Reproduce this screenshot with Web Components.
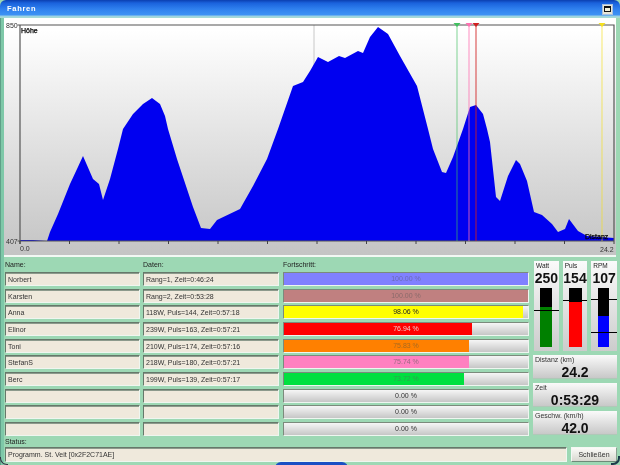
<!DOCTYPE html>
<html lang="de"><head><meta charset="utf-8"><title>Fahren</title>
<style>
html,body{margin:0;padding:0;width:620px;height:465px;overflow:hidden;background:#9dd8b4}
body{font:7px "Liberation Sans",Arial,sans-serif;color:#2a2a2a}
</style></head><body>
<app-window>
  <title-bar slot="title">Fahren</title-bar>
  <elevation-chart slot="chart"></elevation-chart>
  <rider-table slot="table">
    <col-label>Name:</col-label><col-label>Daten:</col-label><col-label style="margin-left:1px">Fortschritt:</col-label>
    <field-box>Norbert</field-box><field-box>Rang=1, Zeit=0:46:24</field-box><progress-bar pct="100" color="#8080ff" ink="#6a6ab4">100.00 %</progress-bar>
    <field-box>Karsten</field-box><field-box>Rang=2, Zeit=0:53:28</field-box><progress-bar pct="100" color="#c08080" ink="#8a6a6a">100.00 %</progress-bar>
    <field-box>Anna</field-box><field-box>118W, Puls=144, Zeit=0:57:18</field-box><progress-bar pct="98.06" color="#ffff00" ink="#222">98.06 %</progress-bar>
    <field-box>Elinor</field-box><field-box>239W, Puls=163, Zeit=0:57:21</field-box><progress-bar pct="76.94" color="#ff0000" ink="#f3c8c8">76.94 %</progress-bar>
    <field-box>Toni</field-box><field-box>210W, Puls=174, Zeit=0:57:16</field-box><progress-bar pct="75.83" color="#ff8000" ink="#a86a20">75.83 %</progress-bar>
    <field-box>StefanS</field-box><field-box>218W, Puls=180, Zeit=0:57:21</field-box><progress-bar pct="75.74" color="#ff80c0" ink="#9a6a80">75.74 %</progress-bar>
    <field-box>Berc</field-box><field-box>199W, Puls=139, Zeit=0:57:17</field-box><progress-bar pct="73.72" color="#00e040" ink="#30a050">73.72 %</progress-bar>
    <field-box></field-box><field-box></field-box><progress-bar pct="0" color="#ccc" ink="#333">0.00 %</progress-bar>
    <field-box></field-box><field-box></field-box><progress-bar pct="0" color="#ccc" ink="#333">0.00 %</progress-bar>
    <field-box></field-box><field-box></field-box><progress-bar pct="0" color="#ccc" ink="#333">0.00 %</progress-bar>
  </rider-table>
  <side-panel slot="side">
    <gauge-row>
      <gauge-meter w="25" bw="12" bl="6" fill="40" color="#008000" marks="22"><span slot="label">Watt</span>250</gauge-meter>
      <gauge-meter w="25" bw="13" bl="6" fill="45" color="#ff0000" marks="12"><span slot="label">Puls</span>154</gauge-meter>
      <gauge-meter w="26" bw="11" bl="7" fill="31" color="#0000ff" marks="11,44"><span slot="label">RPM</span>107</gauge-meter>
    </gauge-row>
    <stat-box><span slot="label">Distanz (km)</span>24.2</stat-box>
    <stat-box><span slot="label">Zeit</span>0:53:29</stat-box>
    <stat-box><span slot="label">Geschw. (km/h)</span>42.0</stat-box>
  </side-panel>
  <status-bar slot="status" text="Programm. St. Veit [0x2F2C71AE]"></status-bar>
</app-window>
<script>
const def=(name,css,html)=>{
  customElements.define(name,class extends HTMLElement{
    constructor(){super();this.attachShadow({mode:'open'});}
    connectedCallback(){if(this.shadowRoot.firstChild)return;
      this.shadowRoot.innerHTML='<style>'+css+'</style>'+(typeof html==='function'?html(this):html);}
  });
};
def('app-window',`
  :host{display:flex;flex-direction:column;position:relative;width:620px;height:465px;overflow:hidden;background:#9dd8b4;filter:blur(.25px)}
  .body{flex:1;display:flex;flex-direction:column;padding:0 2px 0 3px;border-left:1px solid #5f9f88;box-shadow:inset 3px 0 0 #7ec8a8;min-height:0}
  .lower{display:flex;gap:4px}
  .pill{position:absolute;left:275px;top:462px;width:73px;height:6px;background:#1a4fc4;border-radius:6px 6px 0 0}
  .cnr{position:absolute;width:7px;height:7px;bottom:0}
  .cnr.l{left:0;border-left:1px solid #334;border-bottom:1px solid #334;border-radius:0 0 0 7px}
  .cnr.r{right:0;border-right:2px solid #1c3a4a;border-bottom:2px solid #1c3a4a;border-radius:0 0 7px 0}
`,`<slot name="title"></slot><div class="body"><slot name="chart"></slot>
  <div class="lower"><slot name="table"></slot><slot name="side"></slot></div>
  <slot name="status"></slot></div><div class="pill"></div><div class="cnr l"></div><div class="cnr r"></div>`);
def('title-bar',`
  :host{display:flex;align-items:center;justify-content:space-between;height:18px;box-sizing:border-box;padding:0 7px 2px 7px;flex:none;
    background:linear-gradient(#0b3fb0 0,#1a62dc 3px,#2f80ee 9px,#3d92f4 15px,#9ad0e4 16px,#a8dcd0 18px);
    border-radius:6px 6px 0 0;color:#fff;font:bold 7.5px "Liberation Sans",Arial,sans-serif;letter-spacing:.7px}
  .b{width:11px;height:11px;box-sizing:border-box;background:#e9e6d6;display:flex;align-items:center;justify-content:center;margin-top:2px;border:1px solid #a8c0e0}
  .b i{display:block;width:7px;height:6px;box-sizing:border-box;border:1px solid #111;border-top-width:2px;background:#f4f0d8}
`,`<span><slot></slot></span><div class="b"><i></i></div>`);
const P=[[20,241],[33,241],[47,242],[50,233],[58,215],[70,185],[77,170],[83,157],[93,180],[99,185],[103,201],[110,180],[118,150],[123,130],[133,115],[143,105],[152,99],[160,105],[165,117],[168,130],[177,160],[187,190],[193,208],[201,229],[210,230],[217,221],[240,210],[253,187],[267,160],[278,130],[293,87],[303,83],[310,72],[318,58],[328,63],[339,57],[345,59],[358,52],[363,54],[370,38],[378,28],[388,35],[400,57],[417,87],[428,130],[433,150],[442,173],[446,174],[453,158],[463,130],[470,108],[476,106],[483,115],[487,130],[490,143],[496,198],[500,202],[508,177],[516,161],[520,165],[527,182],[534,213],[542,216],[552,225],[558,233],[565,230],[569,220],[578,232],[587,237],[600,238],[614,239],[614,242],[20,242]];
const ticks=Array.from({length:13},(_,i)=>{const x=20+i*49.5;return `<line x1="${x}" x2="${x}" y1="242" y2="245" stroke="#444"/>`}).join('');
const mk=(x,c,o)=>`<line x1="${x}" x2="${x}" y1="26" y2="242" stroke="${c}" stroke-opacity="${o}" stroke-width="1.2"/><polygon points="${x-3.5},24 ${x+3.5},24 ${x},28" fill="${c}"/>`;
def('elevation-chart',`
  :host{display:block;position:relative;flex:none;height:237px;width:612px;background:linear-gradient(#fff 0,#fff 12px,#c4c4c4 100%);border-bottom:2px solid #f2f8f4}
  svg{display:block;width:612px;height:237px}
  span{position:absolute;font:7px/9px "Liberation Sans",Arial,sans-serif;color:#333}
  b{position:absolute;font:normal 7px/9px "Liberation Sans",Arial,sans-serif;color:#000;-webkit-text-stroke:.25px #000}
`,`<svg viewBox="4 19 612 237">
  <line x1="314" x2="314" y1="26" y2="242" stroke="#c8c8c8"/>
  <polygon points="${P.map(p=>p.join(',')).join(' ')}" fill="#0000f0"/>
  <path d="M17.5 26H614V242M17.5 242H614M20 26V245" fill="none" stroke="#555" stroke-width="1.2"/>
  ${ticks}
  ${mk(457,'#40c060',.55)}${mk(469,'#ff70b0',.65)}${mk(476,'#d02020',.72)}${mk(602,'#f4e020',.55)}
</svg>
<span style="left:2px;top:3px">850</span><b style="left:17px;top:8px">Höhe</b>
<span style="left:2px;top:219px">407</span><span style="left:16px;top:226px">0.0</span>
<b style="left:581px;top:214px">Distanz</b><span style="left:596px;top:227px">24.2</span>`);
def('rider-table',`
  :host{display:grid;grid-template-columns:135px 136px 247px;grid-template-rows:9.33px repeat(10,14px);gap:2.67px 3px;padding:3px 0 0 0;flex:none;width:524px;margin-left:1px}
`,`<slot></slot>`);
def('col-label',`:host{display:block;font-size:7px;line-height:9px;color:#222}`,`<slot></slot>`);
def('field-box',`
  :host{display:block;box-sizing:border-box;height:14px;background:#efe9dc;border:1px solid;border-color:#66786a #eef6f0 #eef6f0 #66786a;box-shadow:inset 0 1px 0 #8c9a8c;
    padding:0 2px;font-size:7px;line-height:13px;color:#333;white-space:nowrap;overflow:hidden}
`,`<slot></slot>`);
def('progress-bar',`
  :host{display:block;position:relative;box-sizing:border-box;height:14px;margin-left:1px;background:linear-gradient(#f6f6f6,#c6c6c6);border:1px solid;border-color:#7c8a7c #eef6f0 #eef6f0 #7c8a7c;overflow:hidden}
  .f{height:100%}
  .t{position:absolute;inset:0;text-align:center;font-size:7px;line-height:12px}
`,h=>`<div class="f" style="width:${h.getAttribute('pct')}%;background:${h.getAttribute('color')}"></div><div class="t" style="color:${h.getAttribute('ink')}"><slot></slot></div>`);
def('side-panel',`:host{display:flex;flex-direction:column;gap:4px;padding-top:4px;width:84px;flex:none}`,`<slot></slot>`);
def('gauge-row',`:host{display:flex;gap:4px;height:90px;margin-left:1px}`,`<slot></slot>`);
def('gauge-meter',`
  :host{display:block;position:relative;box-sizing:border-box;height:90px;background:linear-gradient(#fafafa,#cccccc);overflow:hidden}
  .l{height:9px;padding:1px 0 0 2px;font-size:6.5px;line-height:8px;color:#222}
  .v{height:15px;text-align:center;font:bold 14px/15px "Liberation Sans",Arial,sans-serif;color:#111;white-space:nowrap}
  .bar{position:relative;height:59px;background:#000;display:flex;align-items:flex-end;margin-top:2px}
  .bar i{display:block;width:100%}
  .m{position:absolute;height:1px;background:#000}
`,h=>{
  const w=+h.getAttribute('w'),bw=+h.getAttribute('bw'),bl=+h.getAttribute('bl');
  const marks=h.getAttribute('marks').split(',').map(y=>`<div class="m" style="left:${-bl}px;width:${w}px;top:${y}px"></div>`).join('');
  h.style.width=w+'px';
  return `<div class="l"><slot name="label"></slot></div><div class="v"><slot></slot></div>
  <div class="bar" style="width:${bw}px;margin-left:${bl}px"><i style="height:${h.getAttribute('fill')/59*100}%;background:${h.getAttribute('color')}"></i>${marks}</div>`;
});
def('stat-box',`
  :host{display:block;box-sizing:border-box;height:24px;background:linear-gradient(#fafafa,#c8c8c8);padding:1px 2px;overflow:hidden;border-bottom:1px solid #b0c8b8}
  .l{font-size:7px;line-height:8px;color:#333;white-space:nowrap}
  .v{text-align:center;font:bold 14px/14px "Liberation Sans",Arial,sans-serif;color:#111;margin-top:1px}
`,`<div class="l"><slot name="label"></slot></div><div class="v"><slot></slot></div>`);
def('status-bar',`
  :host{display:block;flex:none;margin-left:1px}
  .t{font-size:7px;line-height:9px;height:11px;padding-top:1px;box-sizing:border-box;color:#222}
  .r{display:flex;gap:4px}
  .i{width:562px;height:15px;box-sizing:border-box;background:#efe9dc;border:1px solid;border-color:#66786a #eef6f0 #eef6f0 #66786a;box-shadow:inset 0 1px 0 #8c9a8c;padding:0 2px;font-size:7px;line-height:14px;color:#333}
  .b{width:46px;height:15px;box-sizing:border-box;background:linear-gradient(#fbfbf8,#d8d8d0);border:1px solid;border-color:#f4f8f4 #8aa090 #6e8a78 #f4f8f4;font-size:7px;line-height:14px;text-align:center;color:#333}
`,h=>`<div class="t">Status:</div><div class="r"><div class="i">${h.getAttribute('text')}</div><div class="b">Schließen</div></div>`);
</script>
</body></html>
